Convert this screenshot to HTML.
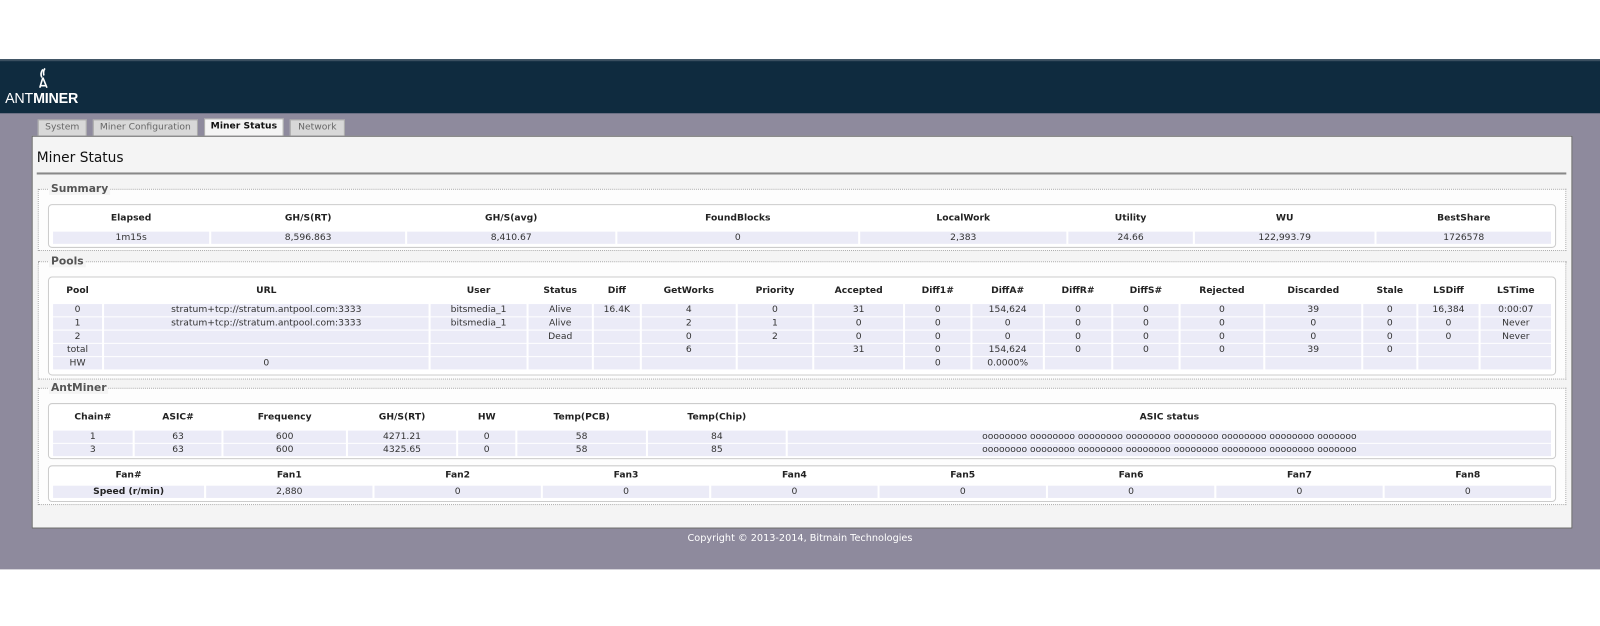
<!DOCTYPE html>
<html><head><meta charset="utf-8"><style>
*{margin:0;padding:0;box-sizing:border-box}
body{width:1600px;height:625px;background:#fff;font-family:"DejaVu Sans","Liberation Sans",sans-serif;font-size:9px;color:#333;position:relative;overflow:hidden}
#w{position:absolute;left:0;top:0;width:1568px;height:613px;transform:scale(1.0204);transform-origin:0 0}
.hdr{position:absolute;left:0;top:58px;width:1600px;height:54px;background:#0f2b3f;border-top:2px solid #3a4f60}
.bg{position:absolute;left:0;top:111px;width:1600px;height:447px;background:#8e8a9d}
.logo{position:absolute;left:5px;top:88px;color:#fff;font-family:"Liberation Sans",sans-serif;font-size:14px;letter-spacing:-0.2px}
.logo b{font-weight:bold}
.tab{position:absolute;top:117px;height:16px;background:#d8d8d8;border:1px solid #aaa;border-bottom:none;color:#666;font-size:9px;text-align:center;line-height:15px}
.tab.on{background:#f4f4f4;color:#111;font-weight:bold;top:116px;height:17px}
.panel{position:absolute;left:31px;top:133px;width:1510px;height:385px;background:#f4f4f4;border:1px solid #666}
h1{position:absolute;left:36px;top:147px;font-size:13.5px;font-weight:normal;color:#111}
.rule{position:absolute;left:36px;top:169px;width:1499px;height:2px;background:#888}
.fs{position:absolute;left:37px;width:1498px;border:1px dotted #aaa;background:#fdfdfd}
.leg{position:absolute;left:48px;font-size:10.5px;font-weight:bold;color:#555;background:#f4f4f4;padding:0 2px}
.box{position:absolute;left:47px;width:1478px;border:1px solid #ccc;border-radius:4px;background:#fff;padding:0 2px}
table{border-collapse:separate;border-spacing:2px 1px;table-layout:fixed;width:100%}
th{font-weight:bold;color:#222;height:24px;text-align:center;font-size:9px}
.fan th{height:17px;line-height:17px}
td{background:#ebebf7;text-align:center;height:12px;line-height:12px;font-size:9px;color:#333;white-space:nowrap;overflow:hidden}
.foot{position:absolute;top:522px;left:0;width:1568px;text-align:center;color:#fff;font-size:9.5px}
</style></head><body><div id="w">
<div class="hdr"></div>
<div class="bg"></div>
<div class="logo">ANT<b>MINER</b></div>
<svg style="position:absolute;left:36px;top:66px" width="14" height="22" viewBox="0 0 14 22"><path d="M6 2 Q3 6 5 10 M8 1 Q6 4 7 8 M6 10 L3 20 M6 10 L10 20 M4 18 L9 18" stroke="#fff" stroke-width="1.6" fill="none"/></svg>
<div class="tab" style="left:37px;width:48px">System</div>
<div class="tab" style="left:91px;width:103px">Miner Configuration</div>
<div class="tab on" style="left:200px;width:78px">Miner Status</div>
<div class="tab" style="left:284px;width:54px">Network</div>
<div class="panel"></div>
<h1>Miner Status</h1>
<div class="rule"></div>

<div class="fs" style="top:185px;height:61px"></div>
<div class="leg" style="top:179px">Summary</div>
<div class="box" style="top:200px;height:43px"><table>
<colgroup><col style="width:153px"><col style="width:190px"><col style="width:204px"><col style="width:236px"><col style="width:202px"><col style="width:122px"><col style="width:176px"><col></colgroup>
<tr><th>Elapsed</th><th>GH/S(RT)</th><th>GH/S(avg)</th><th>FoundBlocks</th><th>LocalWork</th><th>Utility</th><th>WU</th><th>BestShare</th></tr>
<tr><td>1m15s</td><td>8,596.863</td><td>8,410.67</td><td>0</td><td>2,383</td><td>24.66</td><td>122,993.79</td><td>1726578</td></tr>
</table></div>

<div class="fs" style="top:256px;height:116px"></div>
<div class="leg" style="top:250px">Pools</div>
<div class="box" style="top:271px;height:97px"><table>
<colgroup><col style="width:48px"><col style="width:318px"><col style="width:94px"><col style="width:62px"><col style="width:45px"><col style="width:92px"><col style="width:73px"><col style="width:87px"><col style="width:64px"><col style="width:69px"><col style="width:65px"><col style="width:64px"><col style="width:81px"><col style="width:94px"><col style="width:52px"><col style="width:59px"><col></colgroup>
<tr><th>Pool</th><th>URL</th><th>User</th><th>Status</th><th>Diff</th><th>GetWorks</th><th>Priority</th><th>Accepted</th><th>Diff1#</th><th>DiffA#</th><th>DiffR#</th><th>DiffS#</th><th>Rejected</th><th>Discarded</th><th>Stale</th><th>LSDiff</th><th>LSTime</th></tr>
<tr><td>0</td><td>stratum+tcp://stratum.antpool.com:3333</td><td>bitsmedia_1</td><td>Alive</td><td>16.4K</td><td>4</td><td>0</td><td>31</td><td>0</td><td>154,624</td><td>0</td><td>0</td><td>0</td><td>39</td><td>0</td><td>16,384</td><td>0:00:07</td></tr>
<tr><td>1</td><td>stratum+tcp://stratum.antpool.com:3333</td><td>bitsmedia_1</td><td>Alive</td><td></td><td>2</td><td>1</td><td>0</td><td>0</td><td>0</td><td>0</td><td>0</td><td>0</td><td>0</td><td>0</td><td>0</td><td>Never</td></tr>
<tr><td>2</td><td></td><td></td><td>Dead</td><td></td><td>0</td><td>2</td><td>0</td><td>0</td><td>0</td><td>0</td><td>0</td><td>0</td><td>0</td><td>0</td><td>0</td><td>Never</td></tr>
<tr><td>total</td><td></td><td></td><td></td><td></td><td>6</td><td></td><td>31</td><td>0</td><td>154,624</td><td>0</td><td>0</td><td>0</td><td>39</td><td>0</td><td></td><td></td></tr>
<tr><td>HW</td><td>0</td><td></td><td></td><td></td><td></td><td></td><td></td><td>0</td><td>0.0000%</td><td></td><td></td><td></td><td></td><td></td><td></td><td></td></tr>
</table></div>

<div class="fs" style="top:380px;height:115px"></div>
<div class="leg" style="top:374px">AntMiner</div>
<div class="box" style="top:395px;height:55px"><table>
<colgroup><col style="width:78px"><col style="width:85px"><col style="width:120px"><col style="width:106px"><col style="width:56px"><col style="width:126px"><col style="width:135px"><col></colgroup>
<tr><th>Chain#</th><th>ASIC#</th><th>Frequency</th><th>GH/S(RT)</th><th>HW</th><th>Temp(PCB)</th><th>Temp(Chip)</th><th>ASIC status</th></tr>
<tr><td>1</td><td>63</td><td>600</td><td>4271.21</td><td>0</td><td>58</td><td>84</td><td>oooooooo oooooooo oooooooo oooooooo oooooooo oooooooo oooooooo ooooooo</td></tr>
<tr><td>3</td><td>63</td><td>600</td><td>4325.65</td><td>0</td><td>58</td><td>85</td><td>oooooooo oooooooo oooooooo oooooooo oooooooo oooooooo oooooooo ooooooo</td></tr>
</table></div>
<div class="box fan" style="top:456px;height:36px"><table>
<colgroup><col style="width:148px"><col><col><col><col><col><col><col><col></colgroup>
<tr><th>Fan#</th><th>Fan1</th><th>Fan2</th><th>Fan3</th><th>Fan4</th><th>Fan5</th><th>Fan6</th><th>Fan7</th><th>Fan8</th></tr>
<tr><td style="font-weight:bold;color:#222">Speed (r/min)</td><td>2,880</td><td>0</td><td>0</td><td>0</td><td>0</td><td>0</td><td>0</td><td>0</td></tr>
</table></div>

<div class="foot">Copyright © 2013-2014, Bitmain Technologies</div>
</div></body></html>
